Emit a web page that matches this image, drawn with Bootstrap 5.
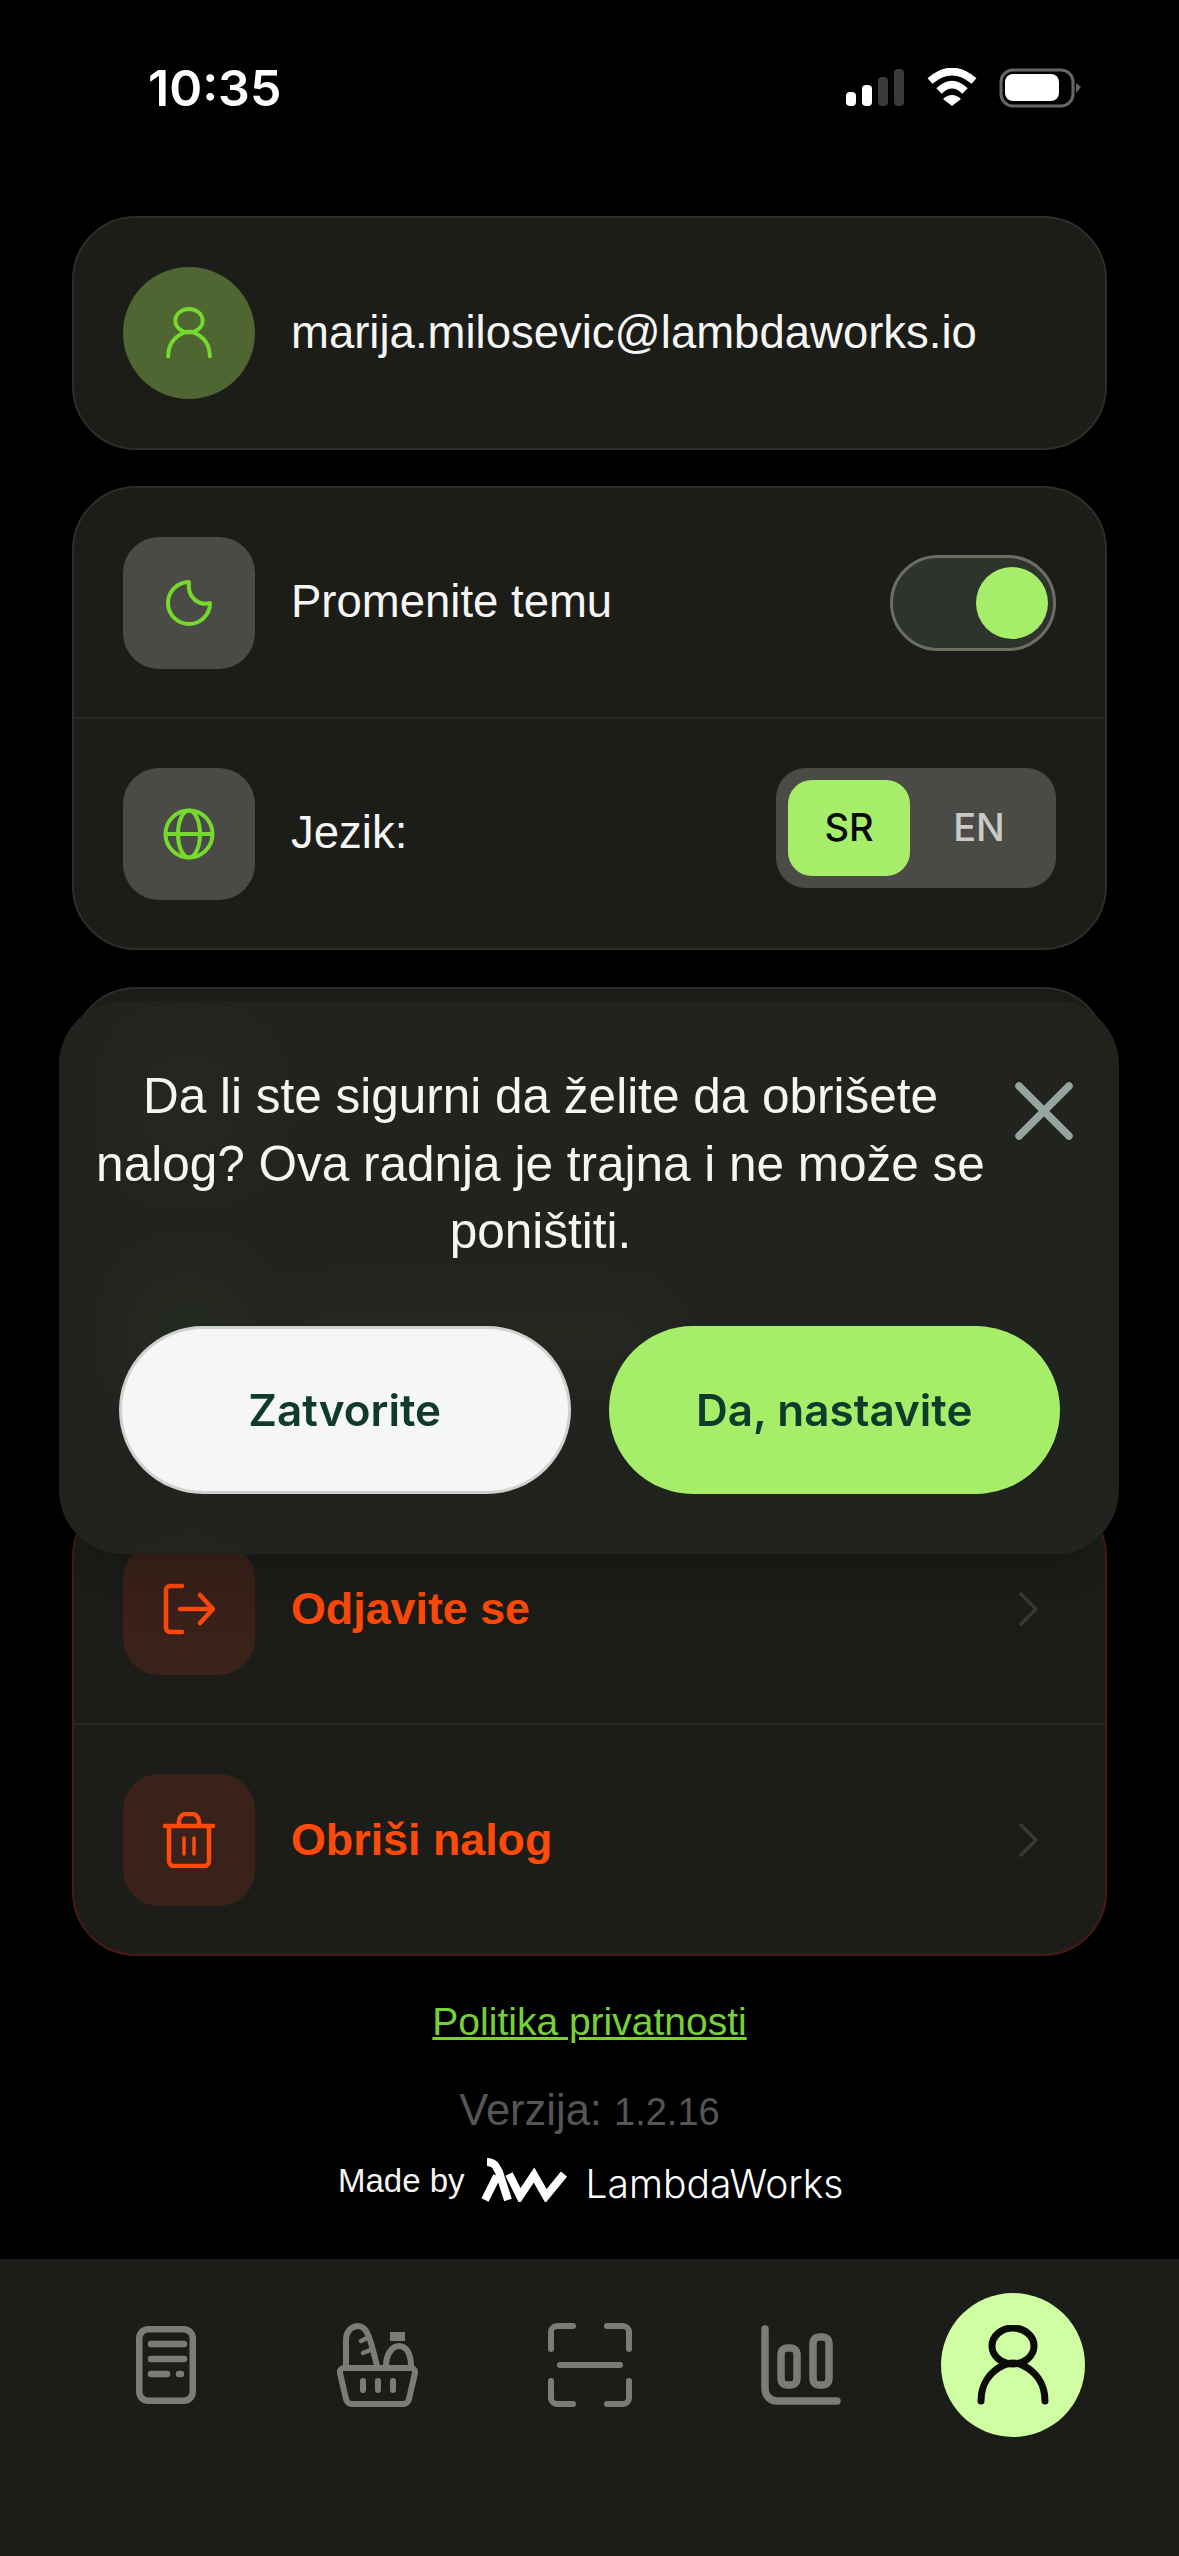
<!DOCTYPE html>
<html lang="sr">
<head>
  <meta charset="UTF-8">
  <meta name="viewport" content="width=device-width, initial-scale=1.0">
  <title>Profil</title>
  <link href="https://cdn.jsdelivr.net/npm/bootstrap@5.3.0/dist/css/bootstrap.min.css" rel="stylesheet">
  <style>
    body {
      background-color: #000;
      color: #f5f6f4;
      font-family: "Liberation Sans", Arial, sans-serif;
      width: 1179px;
      height: 2556px;
      position: relative;
      overflow: hidden;
    }
    .status-bar {
      height: 216px;
      padding: 60px 97px 0 148px;
    }
    .status-time {
      font-family: Inter, sans-serif;
      font-weight: 600;
      font-size: 50px;
      line-height: 56px;
      color: #fff;
    }
    .status-icons { margin-top: 8px; }

    .panel {
      background-color: #1c1d19;
      border: 2px solid #2c2e29;
      border-radius: 64px;
      margin: 0 72px;
      overflow: hidden;
    }
    .panel-danger { border-color: #4a1b13; }
    .mt-card2 { margin-top: 36px; }
    .mt-card3 { margin-top: 37px; }
    .mt-card4 { margin-top: 41px; }

    .panel-row {
      height: 229px;
      padding: 0 49px 0 49px;
      gap: 36px;
    }
    .panel-row.tall { height: 230px; }
    .panel-row + .panel-row { border-top: 2px solid #272924; height: 231px; }
    .row-text { font-size: 45.5px; line-height: 1.2; }
    .row-text.email { font-size: 45.5px; }
    .row-text.danger { color: #ff4a0a; font-weight: 700; font-size: 44.8px; }

    .tile {
      width: 132px;
      height: 132px;
      border-radius: 36px;
      background-color: #4a4b46;
      flex: none;
    }
    .tile.round { border-radius: 50%; background-color: #4f6633; }
    .tile.red { background-color: #3a211a; }
    .ghost-bar { width: 360px; height: 50px; background-color: #4f6633; border-radius: 12px; }

    .theme-switch {
      width: 166px;
      height: 96px;
      border: 3px solid #6a6f60;
      border-radius: 48px;
      background-color: #2f332e;
      padding: 5px;
    }
    .theme-knob { width: 72px; height: 72px; border-radius: 50%; background-color: #a6ee6a; }

    .lang-switch {
      width: 280px;
      height: 120px;
      background-color: #4a4b46;
      border-radius: 30px;
      padding: 12px;
      font-family: Inter, sans-serif;
      font-weight: 500;
      font-size: 38px;
      margin-top: -12px;
    }
    .lang-on, .lang-off { width: 122px; height: 96px; border-radius: 24px; }
    .lang-on { background-color: #a6ee6a; color: #0a0a0a; }
    .lang-off { color: #c9c9c6; flex: 1; padding-left: 4px; }

    .confirm-sheet {
      position: absolute;
      left: 59px;
      top: 1001px;
      width: 1060px;
      height: 553px;
      border-radius: 64px;
      background-color: rgba(34, 37, 31, 0.94);
      backdrop-filter: blur(24px);
      box-shadow: 0 24px 60px rgba(0, 0, 0, 0.18);
      padding: 61px 46px 60px 36px;
    }
    .confirm-text {
      font-size: 49.5px;
      line-height: 67.5px;
      text-align: center;
      color: #f5f6f4;
      width: 893px;
      height: 204px;
    }
    .confirm-close { margin: 20px 0 0 29px; flex: none; }
    .confirm-actions { margin: 60px 13px 0 24px; gap: 38px; }
    .confirm-btn {
      flex: 1;
      height: 168px;
      border-radius: 84px;
      font-family: Inter, sans-serif;
      font-weight: 600;
      font-size: 44px;
      color: #0f3a2c;
      padding: 0;
    }
    .confirm-btn.light { background-color: #f4f7f6; border: 3px solid #cfd2d0; }
    .confirm-btn.green { background-color: #a6ee6a; border: 3px solid #a6ee6a; }

    .policy-link { color: #76d136; font-size: 39px; line-height: 48px; margin-top: 42px; }
    .policy-link a { margin-top: 0; }
    .policy-link:hover { color: #76d136; }
    .version { color: #555; font-size: 43.5px; line-height: 52px; margin-top: 38px; }
    .version span { font-size: 38px; }
    .made-by { margin-top: 20px; height: 52px; padding-left: 338px; }
    .made-by .by { font-size: 33px; color: #f5f6f4; margin: -6px 14px 0 0; }
    .made-by svg { margin-top: -8px; }
    .made-by .brand { font-family: Inter, sans-serif; font-weight: 300; font-size: 39px; color: #fff; margin-left: 19px; }

    .tab-bar {
      position: absolute;
      left: 0;
      right: 0;
      bottom: 0;
      height: 297px;
      background-color: #1c1d19;
      padding: 34px 94px 0;
    }
    .tab-cell { width: 144px; height: 144px; }
    .tab-cell.active { background-color: #d0ffa3; border-radius: 50%; }
  </style>
</head>
<body>
  <div class="status-bar d-flex justify-content-between align-items-start">
    <div class="status-time">10:35</div>
    <svg class="status-icons" width="236" height="40" viewBox="0 0 236 40">
      <rect x="0" y="24" width="10" height="14" rx="4" fill="#fff"/>
      <rect x="16" y="17" width="10" height="21" rx="4" fill="#fff"/>
      <rect x="32" y="9" width="10" height="29" rx="4" fill="#3a3a3a"/>
      <rect x="48" y="1" width="10" height="37" rx="4" fill="#3a3a3a"/>
      <path d="M84 13Q106 -6 128 13M93 23Q106 10 119 23" fill="none" stroke="#fff" stroke-width="7.5"/>
      <path d="M97 31Q106 23 115 31L106 38Z" fill="#fff"/>
      <rect x="155" y="2" width="72" height="36" rx="12" fill="none" stroke="#666" stroke-width="3"/>
      <rect x="159" y="6" width="54" height="27" rx="8" fill="#fff"/>
      <path d="M230 15L235 19L230 25Z" fill="#666"/>
    </svg>
  </div>

  <div class="panel card">
    <div class="panel-row tall d-flex align-items-center">
      <div class="tile round d-flex align-items-center justify-content-center">
        <svg width="48" height="52" viewBox="0 0 72 80" fill="none" stroke="#75d92e" stroke-width="6" stroke-linecap="round">
          <ellipse cx="36" cy="21" rx="21" ry="18"/>
          <path d="M4 76C4 58 14 46 27 40M68 76C68 58 58 46 45 40M27 40Q36 36 45 40"/>
        </svg>
      </div>
      <div class="row-text email">marija.milosevic@lambdaworks.io</div>
    </div>
  </div>

  <div class="panel card mt-card2">
    <div class="panel-row d-flex align-items-center">
      <div class="tile d-flex align-items-center justify-content-center">
        <svg width="48" height="48" viewBox="0 0 48 48" fill="none" stroke="#75d92e" stroke-width="4" stroke-linejoin="round" stroke-linecap="round">
          <path d="M24 3A21 21 0 1 0 45 24C34 27 22 19 24 3Z"/>
        </svg>
      </div>
      <div class="row-text flex-grow-1">Promenite temu</div>
      <div class="theme-switch d-flex justify-content-end align-items-center">
        <div class="theme-knob"></div>
      </div>
    </div>
    <div class="panel-row d-flex align-items-center">
      <div class="tile d-flex align-items-center justify-content-center">
        <svg width="52" height="52" viewBox="0 0 52 52" fill="none" stroke="#75d92e" stroke-width="4">
          <circle cx="26" cy="26" r="23.500"/>
          <ellipse cx="26" cy="26" rx="11" ry="23.500"/>
          <path d="M3 26H49"/>
        </svg>
      </div>
      <div class="row-text flex-grow-1">Jezik:</div>
      <div class="lang-switch d-flex align-items-center">
        <div class="lang-on d-flex align-items-center justify-content-center">SR</div>
        <div class="lang-off d-flex align-items-center justify-content-center">EN</div>
      </div>
    </div>
  </div>

  <div class="panel card mt-card3">
    <div class="panel-row d-flex align-items-center">
      <div class="tile"></div>
    </div>
    <div class="panel-row d-flex align-items-center">
      <div class="tile round"></div>
      <div class="ghost-bar"></div>
    </div>
  </div>

  <div class="panel panel-danger card mt-card4">
    <div class="panel-row d-flex align-items-center">
      <div class="tile red d-flex align-items-center justify-content-center">
        <svg width="52" height="52" viewBox="0 0 52 52" fill="none" stroke="#ff4a0a" stroke-width="4.500" stroke-linecap="round" stroke-linejoin="round">
          <path d="M19 3H7A4 4 0 0 0 3 7V45A4 4 0 0 0 7 49H19"/>
          <path d="M17 26H49M37 12L50 26L37 40"/>
        </svg>
      </div>
      <div class="row-text danger flex-grow-1">Odjavite se</div>
      <svg class="me-3" width="22" height="34" viewBox="0 0 22 34" fill="none" stroke="#383a36" stroke-width="3.500" stroke-linecap="round" stroke-linejoin="round">
        <path d="M3 2L18 17L3 32"/>
      </svg>
    </div>
    <div class="panel-row d-flex align-items-center">
      <div class="tile red d-flex align-items-center justify-content-center">
        <svg width="52" height="56" viewBox="0 0 52 56" fill="none" stroke="#ff4a0a" stroke-width="4.500" stroke-linecap="round" stroke-linejoin="round">
          <path d="M2 14H50M6 14V49A5 5 0 0 0 11 54H41A5 5 0 0 0 46 49V14"/>
          <path d="M16 14V9A7 7 0 0 1 23 2H29A7 7 0 0 1 36 9V14"/>
          <path d="M21 26V42M31 26V42" stroke-width="3.500"/>
        </svg>
      </div>
      <div class="row-text danger flex-grow-1">Obriši nalog</div>
      <svg class="me-3" width="22" height="34" viewBox="0 0 22 34" fill="none" stroke="#383a36" stroke-width="3.500" stroke-linecap="round" stroke-linejoin="round">
        <path d="M3 2L18 17L3 32"/>
      </svg>
    </div>
  </div>

  <div class="text-center">
    <div class="policy-link"><a href="#" class="policy-link">Politika privatnosti</a></div>
    <div class="version">Verzija: <span>1.2.16</span></div>
  </div>
  <div class="made-by d-flex align-items-center">
    <span class="by">Made by</span>
    <svg width="88" height="44" viewBox="0 0 88 44" fill="none" stroke="#fff" stroke-width="8" stroke-linejoin="miter">
      <path d="M8 4C15 4 17 8 20 14L29 42M18 18L6 42"/>
      <path d="M30 16L41 38L55 17L67 38L85 16"/>
    </svg>
    <span class="brand">LambdaWorks</span>
  </div>

  <div class="confirm-sheet">
    <div class="d-flex align-items-start">
      <div class="confirm-text">Da li ste sigurni da želite da obrišete nalog? Ova radnja je trajna i ne može se poništiti.</div>
      <svg class="confirm-close" width="58" height="58" viewBox="0 0 58 58" fill="none" stroke="#95a6a0" stroke-width="7.500" stroke-linecap="round">
        <path d="M4 4L54 54M54 4L4 54"/>
      </svg>
    </div>
    <div class="confirm-actions d-flex">
      <button type="button" class="btn confirm-btn light">Zatvorite</button>
      <button type="button" class="btn confirm-btn green">Da, nastavite</button>
    </div>
  </div>

  <nav class="tab-bar d-flex justify-content-between align-items-start">
    <div class="tab-cell d-flex align-items-center justify-content-center">
      <svg width="60" height="78" viewBox="0 0 60 78" fill="none" stroke="#7b7c77" stroke-width="6.500" stroke-linecap="round">
        <rect x="3.250" y="3.250" width="53.500" height="71.500" rx="9"/>
        <path d="M15 18H48M15 33H48M15 48H31M43 48H45"/>
      </svg>
    </div>
    <div class="tab-cell d-flex align-items-center justify-content-center">
      <svg width="81" height="84" viewBox="0 0 81 84" fill="none" stroke="#7b7c77" stroke-width="6" stroke-linecap="round" stroke-linejoin="round">
        <path d="M7 45H74A4 4 0 0 1 78 50L72 76A6 6 0 0 1 66 81H15A6 6 0 0 1 9 76L3 50A4 4 0 0 1 7 45Z"/>
        <path d="M26 58V67M41 58V67M56 58V67"/>
        <path d="M9 43V17C9 8 15 3 21 3C30 3 33 14 40 43"/>
        <path d="M24 18L30 15M26 30L33 27" stroke-width="4.500"/>
        <path d="M49 43C49 30 56 23 62 23C69 23 74 30 74 43"/>
        <rect x="53" y="9" width="15" height="9" fill="#7b7c77" stroke="none"/>
      </svg>
    </div>
    <div class="tab-cell d-flex align-items-center justify-content-center">
      <svg width="84" height="84" viewBox="0 0 84 84" fill="none" stroke="#7b7c77" stroke-width="6" stroke-linecap="round">
        <path d="M3 26V9A6 6 0 0 1 9 3H25M59 3H75A6 6 0 0 1 81 9V26M3 58V75A6 6 0 0 0 9 81H25M59 81H75A6 6 0 0 0 81 75V58M12 42H72"/>
      </svg>
    </div>
    <div class="tab-cell d-flex align-items-center justify-content-center">
      <svg width="80" height="80" viewBox="0 0 80 80" fill="none" stroke="#7b7c77" stroke-width="7.500" stroke-linecap="round">
        <path d="M4 4V64A12 12 0 0 0 16 76H76"/>
        <rect x="20" y="23" width="16" height="37" rx="6"/>
        <rect x="52" y="12" width="16" height="48" rx="6"/>
      </svg>
    </div>
    <div class="tab-cell active d-flex align-items-center justify-content-center">
      <svg width="72" height="80" viewBox="0 0 72 80" fill="none" stroke="#0b0c0a" stroke-width="7" stroke-linecap="round">
        <ellipse cx="36" cy="21" rx="21" ry="18"/>
        <path d="M4 76C4 58 14 46 27 40M68 76C68 58 58 46 45 40M27 40Q36 36 45 40"/>
      </svg>
    </div>
  </nav>

  <script src="https://cdn.jsdelivr.net/npm/bootstrap@5.3.0/dist/js/bootstrap.bundle.min.js"></script>
</body>
</html>
